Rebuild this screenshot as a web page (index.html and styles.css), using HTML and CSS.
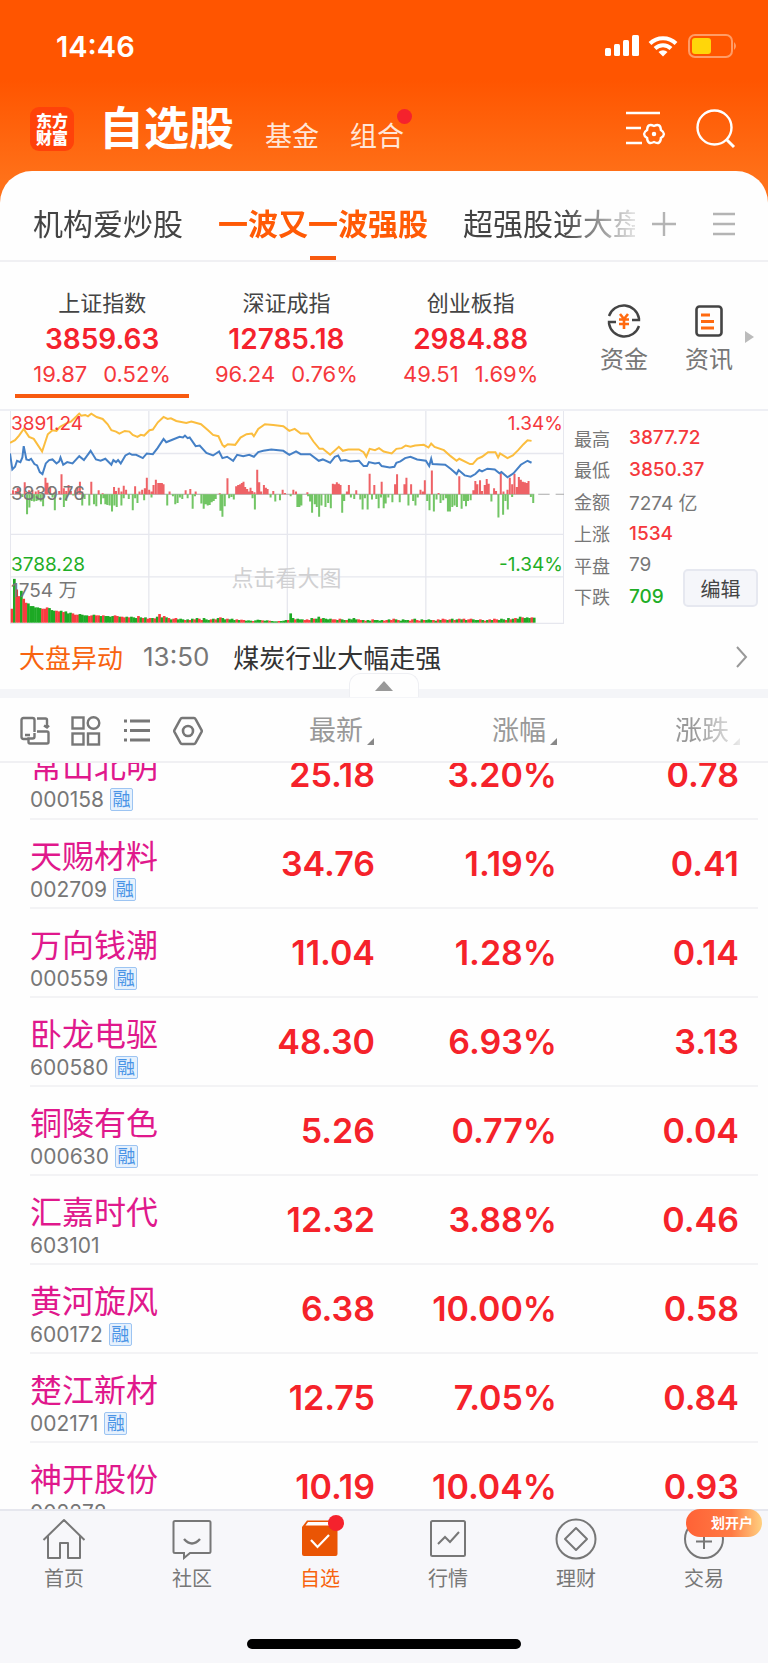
FILE: index.html
```html
<!DOCTYPE html>
<html lang="zh-CN">
<head>
  <meta charset="UTF-8" />
  <meta name="viewport" content="width=device-width, initial-scale=1" />
  <title>自选股</title>
  <link rel="stylesheet" href="styles.css">
</head>
<body>

  <header class="header">
    <div class="status">
      <span class="time">14:46</span>
      <svg class="signal" width="36" height="22" viewBox="0 0 36 22" fill="#fff">
        <rect x="1" y="13" width="6" height="8" rx="1.5" /><rect x="10" y="9" width="6" height="12" rx="1.5" />
        <rect x="19" y="5" width="6" height="16" rx="1.5" /><rect x="28" y="0" width="7" height="21" rx="1.5" />
      </svg>
      <svg class="wifi" width="30" height="22" viewBox="0 0 30 22" fill="none" stroke="#fff" stroke-width="4">
        <path d="M2 8.500a18.500 18.500 0 0 1 26 0M7 13.500a11.500 11.500 0 0 1 16 0" />
        <path d="M15 21.500l-4.500-4.500a6.500 6.500 0 0 1 9 0z" fill="#fff" stroke="none" />
      </svg>
      <svg class="battery" width="50" height="24" viewBox="0 0 50 24">
        <rect x="1" y="1" width="43" height="22" rx="6" fill="none" stroke="#ff9c66" stroke-width="2" />
        <rect x="4" y="4" width="19" height="16" rx="3" fill="#ffd60a" />
        <path d="M46 8q4 4 0 8z" fill="#ff9c66" />
      </svg>
    </div>
    <nav class="main-nav">
      <div class="logo">东方<br>财富</div>
      <a href="#" class="current">自选股</a>
      <a href="#">基金</a>
      <a href="#" class="has-dot">组合</a>
      <button class="icon-btn filter" aria-label="设置">
        <svg width="40" height="36" viewBox="0 0 40 36" fill="none" stroke="#fff" stroke-width="2.400">
          <path d="M0 2h34M0 17h15M0 32h16" />
          <path d="M34.900 27Q34.500 34.300 28 31Q21.500 34.300 21.100 27Q15 23 21.100 19Q21.500 11.700 28 15Q34.500 11.700 34.900 19Q41 23 34.900 27z" />
          <circle cx="28" cy="23" r="1.500" fill="#fff" stroke-width="1.500" />
        </svg>
      </button>
      <button class="icon-btn" aria-label="搜索">
        <svg width="40" height="40" viewBox="0 0 40 40" fill="none" stroke="#fff" stroke-width="2.400">
          <circle cx="18.500" cy="18.500" r="17" /><path d="M30 30l8 8" stroke-width="3" />
        </svg>
      </button>
    </nav>
  </header>

  <main class="sheet">
    <div class="groups">
      <div class="group-list">
        <a href="#">机构爱炒股</a>
        <a href="#" class="current">一波又一波强股</a>
        <a href="#">超强股逆大盘</a>
      </div>
      <button class="icon-btn plus" aria-label="添加">
        <svg width="24" height="24" viewBox="0 0 24 24" stroke="#b4b4b4" stroke-width="2.400"><path d="M0 12h24M12 0v24" /></svg>
      </button>
      <button class="icon-btn" aria-label="管理">
        <svg width="22" height="24" viewBox="0 0 22 24" stroke="#b4b4b4" stroke-width="2.400"><path d="M0 2h22M0 12h22M0 22h22" /></svg>
      </button>
    </div>

    <section class="indices">
      <div class="index active"><h2>上证指数</h2><strong>3859.63</strong><p><span>19.87</span><span>0.52%</span></p></div>
      <div class="index"><h2>深证成指</h2><strong>12785.18</strong><p><span>96.24</span><span>0.76%</span></p></div>
      <div class="index"><h2>创业板指</h2><strong>2984.88</strong><p><span>49.51</span><span>1.69%</span></p></div>
      <div class="shortcuts">
        <a href="#">
          <svg width="34" height="34" viewBox="0 0 34 34" fill="none" stroke="#444" stroke-width="2.400">
            <path d="M2 12A15.500 15.500 0 0 1 32 14.500v1.500h-7M32 22A15.500 15.500 0 0 1 2 19.500V18h7" />
            <path d="M13 10l4 5 4-5M12 15.500h10M12 20h10M17 15v10" stroke="#ff6a10" stroke-width="2.600" />
          </svg>
          资金
        </a>
        <a href="#">
          <svg width="28" height="34" viewBox="0 0 28 34" fill="none" stroke="#444" stroke-width="2.600">
            <rect x="1.500" y="2.500" width="25" height="29" rx="3" />
            <path d="M6 11h9M6 17.500h13M6 24h13" stroke="#ff6a10" stroke-width="3" />
          </svg>
          资讯
        </a>
        <span class="more"></span>
      </div>
    </section>

    <section class="market">
      <div class="chart">
        <svg id="chart" viewBox="33 30 1656 642" preserveAspectRatio="none"></svg>
        <span class="label high up">3891.24</span>
        <span class="label high end up">1.34%</span>
        <span class="label mid">3839.76</span>
        <span class="label low down">3788.28</span>
        <span class="label low end down">-1.34%</span>
        <span class="label vol">1754 万</span>
        <span class="label hint">点击看大图</span>
      </div>
      <dl class="summary">
        <div><dt>最高</dt><dd class="up">3877.72</dd></div>
        <div><dt>最低</dt><dd class="up">3850.37</dd></div>
        <div><dt>金额</dt><dd>7274 亿</dd></div>
        <div><dt>上涨</dt><dd class="up">1534</dd></div>
        <div><dt>平盘</dt><dd>79</dd></div>
        <div><dt>下跌</dt><dd class="down">709</dd></div>
      </dl>
      <button class="edit">编辑</button>
    </section>

    <a href="#" class="news">
      <b>大盘异动</b>
      <time>13:50</time>
      <span>煤炭行业大幅走强</span>
      <svg width="12" height="22" viewBox="0 0 12 22" fill="none" stroke="#999" stroke-width="2"><path d="M1 1l9 10-9 10" /></svg>
    </a>
    <div class="band"><button class="collapse" aria-label="收起"></button></div>

    <div class="columns">
      <div class="tools">
        <button class="icon-btn" aria-label="横屏">
          <svg width="30" height="30" viewBox="0 0 30 30" fill="none" stroke="#777" stroke-width="2.400">
            <path d="M9 23H3.500Q1.500 23 1.500 21V4q0-2 2-2h9q2 0 2 2v12M5 19h5" />
            <path d="M17 2.500h8.500q1.500 0 1.500 1.500v7M24 9.500l3 2 2-2" />
            <path d="M17 15.500h10q1.500 0 1.500 1.500v9q0 1.500-1.500 1.500H10q-1.500 0-1.500-1.500v-3.500h4q2 0 2-2v-3.500" />
          </svg>
        </button>
        <button class="icon-btn" aria-label="宫格">
          <svg width="30" height="30" viewBox="0 0 30 30" fill="none" stroke="#777" stroke-width="2.400">
            <rect x="1.500" y="1.500" width="11" height="11" /><circle cx="22.500" cy="7" r="5.800" />
            <rect x="1.500" y="17.500" width="11" height="11" /><rect x="17" y="17.500" width="11" height="11" />
          </svg>
        </button>
        <button class="icon-btn" aria-label="列表">
          <svg width="30" height="30" viewBox="0 0 30 30" stroke="#777" stroke-width="3">
            <path d="M2 5h3M8 5h20M2 14.500h3M8 14.500h20M2 24h3M8 24h20" />
          </svg>
        </button>
        <button class="icon-btn" aria-label="设置">
          <svg width="30" height="30" viewBox="0 0 30 30" fill="none" stroke="#777" stroke-width="2.600">
            <path d="M9 2h12q1 0 1.500 1l6 11q.5 1 0 2l-6 11q-.5 1-1.500 1H9q-1 0-1.500-1l-6-11q-.5-1 0-2l6-11q.5-1 1.500-1z" />
            <circle cx="15" cy="15" r="5" />
          </svg>
        </button>
      </div>
      <button class="sort">最新</button>
      <button class="sort">涨幅</button>
      <button class="sort faded">涨跌</button>
    </div>

    <div class="stocks" id="stocks">
      <table>
        <tbody id="rows"></tbody>
      </table>
    </div>
  </main>

  <footer class="tabbar">
    <nav>
      <a href="#">
        <svg width="44" height="42" viewBox="0 0 44 42" fill="none" stroke="#777" stroke-width="2">
          <path d="M1.500 22L22 2l20.500 20M6 18v22h12V25h8v15h12V18" stroke-linejoin="round" />
        </svg>
        首页
      </a>
      <a href="#">
        <svg width="44" height="42" viewBox="0 0 44 42" fill="none" stroke="#777" stroke-width="2">
          <path d="M5 3h34q1.500 0 1.500 1.500v29q0 1.500-1.500 1.500H20l-6 5v-5H5q-1.500 0-1.500-1.500v-29Q3.500 3 5 3z" />
          <path d="M14 21q8 9 16 0" stroke-width="2.400" />
        </svg>
        社区
      </a>
      <a href="#" class="current has-dot">
        <svg width="44" height="42" viewBox="0 0 44 42" fill="none">
          <path d="M4 9l5-6.500h29q1.500 0 1.500 2V36q0 2-2 2H6q-2 0-2-2z" fill="#ea5504" />
          <path d="M7.500 7.500L10 4h27l-2.500 3.500z" fill="#fff" />
          <path d="M13 22l6.500 7L31 17" stroke="#fff" stroke-width="2.200" />
        </svg>
        自选
      </a>
      <a href="#">
        <svg width="44" height="42" viewBox="0 0 44 42" fill="none" stroke="#777" stroke-width="2">
          <rect x="5" y="3" width="34" height="35" rx="1.500" /><path d="M12 26l7-7 5 5 9-10" />
        </svg>
        行情
      </a>
      <a href="#">
        <svg width="44" height="42" viewBox="0 0 44 42" fill="none" stroke="#777" stroke-width="2">
          <circle cx="22" cy="21" r="19.500" /><path d="M22 10l11 11-11 11-11-11z" stroke-linejoin="round" />
        </svg>
        理财
      </a>
      <a href="#">
        <svg width="44" height="42" viewBox="0 0 44 42" fill="none" stroke="#777" stroke-width="2">
          <circle cx="22" cy="21" r="19" /><path d="M22 14v17M14 23.500h16" />
        </svg>
        交易
        <span class="promo">划开户</span>
      </a>
    </nav>
    <div class="home-bar"></div>
  </footer>

  <script src="script.js"></script>
</body>
</html>
```

FILE: styles.css
```css
* {
  box-sizing: border-box;
  margin: 0;
  padding: 0;
}
body {
  height: 100vh;
  display: flex;
  flex-direction: column;
  overflow: hidden;
  font-family: Inter, "Noto Sans CJK SC", sans-serif;
  color: #444;
  background: linear-gradient(#ff5500 80px, #ff7119 180px);
}
a {
  color: inherit;
  text-decoration: none;
}
button {
  font-family: inherit;
  color: inherit;
  background: none;
  border: none;
}
svg {
  display: block;
}
.icon-btn {
  display: flex;
  flex: none;
}
.up {
  color: #f5383c;
}
.down {
  color: #1fae26;
}

/* 顶部 */
.header {
  color: #fff;
}
.status {
  display: flex;
  align-items: center;
  height: 92px;
  padding: 0 30px 0 56px;
}
.time {
  margin-right: auto;
  font-size: 29px;
  font-weight: 600;
}
.wifi {
  margin: 0 10px 0 8px;
}
.main-nav {
  display: flex;
  align-items: center;
  height: 79px;
  padding: 0 32px 5px 30px;
}
.logo {
  width: 44px;
  height: 44px;
  padding-top: 6px;
  margin-right: 25px;
  border-radius: 9px;
  background: #ff420a;
  font-size: 16px;
  line-height: 17px;
  font-weight: 900;
  text-align: center;
}
.main-nav a {
  position: relative;
  margin-right: 31px;
  padding-top: 16px;
  font-size: 27px;
  line-height: 40px;
  color: #ffe6d8;
}
.main-nav a.current {
  padding-top: 0;
  font-size: 45px;
  line-height: 60px;
  font-weight: 700;
  color: #fff;
}
.has-dot::after {
  content: "";
  position: absolute;
  top: 8px;
  right: -8px;
  width: 15px;
  height: 15px;
  border-radius: 50%;
  background: #f5222d;
}
.filter {
  margin-left: auto;
  margin-right: 30px;
}

/* 分组 */
.sheet {
  flex: 1;
  min-height: 0;
  display: flex;
  flex-direction: column;
  background: #fefefe;
  border-radius: 32px 32px 0 0;
}
.groups {
  display: flex;
  flex: none;
  align-items: center;
  height: 91px;
  padding: 0 33px;
  border-bottom: 2px solid #f0f0f3;
}
.group-list {
  flex: 1;
  display: flex;
  gap: 35px;
  height: 91px;
  overflow: hidden;
  white-space: nowrap;
  font-size: 30px;
  line-height: 108px;
  -webkit-mask-image: linear-gradient(90deg, #000 88%, transparent 102%);
  mask-image: linear-gradient(90deg, #000 88%, transparent 102%);
}
.group-list .current {
  position: relative;
  font-weight: 700;
  color: #ff5a05;
}
.group-list .current::after {
  content: "";
  position: absolute;
  left: 50%;
  top: 86px;
  width: 26px;
  height: 4px;
  margin-left: -13px;
  background: #f85a10;
}
.groups .icon-btn {
  margin-top: 16px;
}
.groups .plus {
  margin-left: 17px;
  margin-right: 37px;
}

/* 指数 */
.indices {
  display: flex;
  flex: none;
  height: 149px;
  padding: 0 0 11px 10px;
  border-bottom: 2px solid #eeeff4;
}
.index {
  flex: 185;
  padding-top: 25px;
  margin: 0 5px;
  text-align: center;
}
.index.active {
  border-bottom: 4px solid #f85a10;
}
.index h2 {
  font-size: 22px;
  line-height: 32px;
  font-weight: 400;
}
.index strong {
  display: block;
  font-size: 28px;
  line-height: 40px;
  font-weight: 600;
  color: #f5222d;
}
.index p {
  display: flex;
  justify-content: center;
  gap: 16px;
  font-size: 22px;
  line-height: 30px;
  color: #f5383c;
}
.shortcuts {
  flex: 203;
  display: flex;
  align-items: center;
  justify-content: flex-end;
  padding-right: 14px;
  font-size: 24px;
  line-height: 36px;
  color: #777;
}
.shortcuts a {
  display: flex;
  flex-direction: column;
  align-items: center;
  gap: 4px;
  margin-right: 37px;
  padding-top: 22px;
}
.shortcuts a + a {
  margin-right: 12px;
}
.more {
  margin-top: 14px;
  border-left: 9px solid #bbb;
  border-top: 6px solid transparent;
  border-bottom: 6px solid transparent;
}

/* 分时图 */
.market {
  display: flex;
  flex: none;
  height: 213px;
  padding: 0 10px 0 10px;
}
.chart {
  position: relative;
  flex: 1;
  margin-right: 10px;
}
#chart {
  width: 100%;
  height: 100%;
}
.label {
  position: absolute;
  left: 1px;
  font-size: 19px;
  line-height: 24px;
}
.label.end {
  left: auto;
  right: 1px;
}
.high {
  top: 1px;
}
.mid {
  top: 71px;
  color: #777;
}
.low {
  top: 142px;
}
.vol {
  top: 168px;
  color: #777;
  word-spacing: normal;
}
.hint {
  left: 40%;
  top: 151px;
  font-size: 22px;
  line-height: 32px;
  color: #d0d0d2;
}
.summary {
  display: grid;
  width: 109px;
  padding: 11px 0 12px;
  font-size: 18px;
  white-space: nowrap;
  color: #777;
}
.summary div {
  display: flex;
  align-items: center;
  gap: 19px;
}
.summary dd {
  font-size: 19px;
}
.summary .up,
.summary .down {
  font-weight: 500;
}
.edit {
  align-self: flex-end;
  width: 75px;
  height: 38px;
  margin-bottom: 17px;
  border: 2px solid #e6e8f0;
  border-radius: 5px;
  background: #f5f6fa;
  font-size: 20px;
}

/* 异动 */
.news {
  display: flex;
  flex: none;
  align-items: center;
  height: 65px;
  padding: 0 20px 0 19px;
  font-size: 26px;
}
.news b {
  font-weight: 400;
  color: #f8640f;
}
.news time {
  margin: 0 24px 0 20px;
  color: #777;
}
.news span {
  color: #333;
}
.news svg {
  margin-left: auto;
}
.band {
  position: relative;
  flex: none;
  height: 9px;
  background: #f4f5f8;
}
.collapse {
  position: absolute;
  left: 50%;
  bottom: 1px;
  width: 70px;
  height: 24px;
  margin-left: -35px;
  border: 1px solid #eeeff3;
  border-bottom: none;
  border-radius: 12px 12px 0 0;
  background: #fefefe;
}
.collapse::after {
  content: "";
  display: block;
  width: 0;
  margin: 0 auto;
  border-bottom: 10px solid #999;
  border-left: 9px solid transparent;
  border-right: 9px solid transparent;
}

/* 列表 */
.columns {
  display: flex;
  flex: none;
  align-items: center;
  height: 65px;
  padding: 2px 28px 0 20px;
  border-bottom: 2px solid #f0f0f3;
}
.tools {
  display: flex;
  gap: 21px;
  margin-right: auto;
}
.sort {
  display: flex;
  align-items: flex-end;
  justify-content: flex-end;
  width: 183px;
  gap: 4px;
  font-size: 27px;
  line-height: 40px;
  color: #999;
}
.sort:first-of-type {
  width: 140px;
}
.sort::after {
  content: "";
  margin-bottom: 6px;
  border-left: 7px solid transparent;
  border-bottom: 7px solid #888;
}
.sort.faded {
  -webkit-mask-image: linear-gradient(90deg, #000 75%, transparent 105%);
  mask-image: linear-gradient(90deg, #000 75%, transparent 105%);
}
.stocks {
  flex: 1;
  min-height: 0;
  overflow-y: auto;
  scrollbar-width: none;
  padding: 0 10px 0 30px;
}
.stocks table {
  width: 100%;
  border-collapse: collapse;
  table-layout: fixed;
}
.stocks td {
  width: 182px;
  height: 89px;
  border-bottom: 2px solid #f3f3f5;
  text-align: right;
  font-size: 34px;
  font-weight: 600;
  color: #f5222a;
}
.stocks td:last-child {
  width: 201px;
  padding-right: 19px;
}
.stocks th {
  padding-top: 18px;
  vertical-align: top;
  text-align: left;
  font-weight: 400;
  border-bottom: 2px solid #f3f3f5;
}
.name {
  display: block;
  font-size: 32px;
  line-height: 38px;
  color: #e0188c;
}
.code {
  display: flex;
  align-items: center;
  gap: 6px;
  height: 26px;
  font-size: 21px;
  color: #777;
}
.code i {
  width: 23px;
  height: 23px;
  border: 1px solid #9cc4f2;
  border-radius: 2px;
  background: #e6f1fd;
  font-size: 18px;
  line-height: 21px;
  font-style: normal;
  text-align: center;
  color: #4a94e6;
}

/* 底部 */
.tabbar {
  flex: none;
  height: 154px;
  display: flex;
  flex-direction: column;
  align-items: center;
  justify-content: space-between;
  padding-bottom: 14px;
  border-top: 2px solid #e6e7ee;
  background: #f7f7fa;
}
.tabbar nav {
  display: flex;
  width: 100%;
}
.tabbar a {
  position: relative;
  flex: 1;
  display: flex;
  flex-direction: column;
  align-items: center;
  padding-top: 7px;
  font-size: 20px;
  line-height: 38px;
  color: #777;
}
.tabbar a.current {
  color: #f8640f;
}
.tabbar .has-dot::after {
  top: 4px;
  right: 40px;
  width: 16px;
  height: 16px;
}
.promo {
  position: absolute;
  top: -2px;
  right: 6px;
  width: 76px;
  height: 28px;
  padding-right: 9px;
  border-radius: 14px;
  background: linear-gradient(90deg, #ff6236, #ff7a44 60%, #ffd080);
  font-size: 14px;
  line-height: 28px;
  font-weight: 700;
  text-align: right;
  color: #fff;
}
.home-bar {
  width: 274px;
  height: 10px;
  border-radius: 5px;
  background: #000;
}
```

FILE: script.js
```js
const stocks = [
  ["常山北明", "000158", true, "25.18", "3.20%", "0.78"],
  ["天赐材料", "002709", true, "34.76", "1.19%", "0.41"],
  ["万向钱潮", "000559", true, "11.04", "1.28%", "0.14"],
  ["卧龙电驱", "600580", true, "48.30", "6.93%", "3.13"],
  ["铜陵有色", "000630", true, "5.26", "0.77%", "0.04"],
  ["汇嘉时代", "603101", false, "12.32", "3.88%", "0.46"],
  ["黄河旋风", "600172", true, "6.38", "10.00%", "0.58"],
  ["楚江新材", "002171", true, "12.75", "7.05%", "0.84"],
  ["神开股份", "002278", false, "10.19", "10.04%", "0.93"]
];

document.getElementById("rows").innerHTML = stocks.map(([name, code, margin, price, pct, diff]) =>
  `<tr><th scope="row"><span class="name">${name}</span><span class="code">${code}${margin ? "<i>融</i>" : ""}</span></th>` +
  `<td>${price}</td><td>${pct}</td><td>${diff}</td></tr>`
).join("");

// 列表停在第一行的中间
document.getElementById("stocks").scrollTop = 33;

// 分时线
const avgLine = "33,126 48,118 60,104 74,84 90,108 104,114 129,152 146,100 160,88 172,90 182,78 200,68 215,62 232,46 240,38 246,44 258,42 266,46 276,38 292,48 310,54 325,70 336,88 350,92 360,98 376,90 390,92 400,102 414,108 424,102 434,104 450,88 460,86 475,64 492,48 504,54 514,52 530,60 560,66 575,62 604,70 625,88 640,102 656,106 668,132 674,138 684,130 706,132 722,110 740,100 756,98 762,106 775,84 795,70 820,72 850,76 868,90 884,84 902,98 924,98 940,122 958,144 968,144 990,162 1016,138 1028,150 1044,146 1076,146 1090,154 1098,168 1108,144 1124,148 1136,142 1150,152 1174,158 1188,144 1204,142 1216,134 1230,138 1244,134 1270,132 1284,140 1292,128 1302,138 1330,148 1350,166 1368,180 1376,174 1408,190 1416,190 1430,174 1444,168 1462,154 1484,154 1492,170 1498,158 1520,172 1536,164 1552,148 1568,130 1580,118 1592,120";
const priceLine = "33,158 40,206 48,198 54,180 64,184 70,170 74,136 82,176 90,178 96,174 106,190 114,194 122,214 130,220 140,188 150,178 160,176 172,188 180,182 184,170 192,192 204,184 220,188 240,166 254,178 274,150 290,176 304,180 318,174 336,192 342,178 350,184 356,178 364,188 378,164 390,158 398,162 410,162 430,172 442,158 460,160 474,142 492,114 500,124 520,116 540,108 550,110 556,104 564,112 570,110 588,136 600,134 620,156 640,164 658,152 668,172 682,168 700,180 712,162 730,166 748,162 762,168 775,154 790,150 814,146 850,150 868,162 888,152 902,160 930,160 956,180 968,176 990,186 1004,168 1014,164 1022,180 1036,178 1050,182 1076,180 1090,196 1100,196 1106,184 1124,188 1136,186 1144,196 1168,200 1182,198 1188,186 1200,182 1214,172 1230,168 1250,176 1276,180 1286,196 1292,174 1296,190 1334,192 1350,204 1368,220 1374,208 1392,224 1410,228 1424,220 1436,208 1444,212 1460,204 1482,206 1496,218 1502,214 1520,230 1538,218 1560,192 1580,180 1592,186";

// 红绿柱: x,高度
const upBars = "42,12 50,10 56,20 62,18 77,36 90,12 100,14 110,8 118,12 139,50 145,35 153,20 166,6 180,10 187,60 194,18 201,10 208,28 215,10 228,12 235,22 242,38 249,8 276,38 298,12 310,3 344,22 350,10 358,20 366,8 373,26 380,14 407,24 420,8 428,14 436,18 442,50 449,14 456,8 462,28 469,44 476,34 482,34 487,34 492,30 510,8 558,12 572,16 588,8 660,3 683,48 709,24 715,28 721,30 726,34 731,38 736,22 742,16 748,8 752,20 757,10 764,6 772,74 778,36 784,8 792,28 798,20 803,16 820,10 848,14 855,4 880,14 888,8 922,6 998,32 1004,30 1010,36 1016,32 1021,28 1040,8 1046,28 1068,12 1108,62 1122,28 1144,38 1184,30 1190,60 1212,30 1218,50 1232,30 1260,14 1267,8 1273,42 1294,72 1314,4 1376,54 1418,12 1424,40 1430,30 1438,42 1444,10 1452,28 1458,46 1464,32 1480,18 1486,10 1500,64 1508,8 1520,14 1527,50 1534,30 1541,62 1548,22 1554,52 1560,44 1566,38 1572,36 1578,34 1583,40";
const downBars = "70,8 84,60 91,40 98,20 105,22 112,20 118,18 125,22 132,36 160,10 167,48 194,38 201,20 222,4 249,34 256,14 270,34 284,30 291,36 305,30 312,12 318,30 324,32 331,34 338,52 345,34 352,38 366,34 373,12 388,14 400,48 407,12 414,26 434,18 456,10 503,34 520,6 527,30 534,26 541,10 548,14 564,12 579,44 586,6 605,28 612,44 618,30 624,34 630,32 636,24 642,20 648,14 662,50 668,68 675,36 688,12 695,8 702,16 758,12 765,46 812,10 826,22 840,18 872,6 892,38 898,38 904,34 924,6 930,22 936,56 944,30 950,38 957,68 964,34 976,38 984,26 992,42 1026,56 1032,20 1052,10 1062,14 1080,16 1087,46 1094,12 1102,46 1115,16 1128,14 1135,42 1142,10 1150,42 1156,28 1164,10 1176,24 1198,24 1224,34 1238,20 1245,34 1252,10 1280,20 1287,48 1300,52 1308,16 1320,26 1328,18 1336,12 1342,52 1348,52 1355,38 1362,34 1369,38 1383,44 1390,20 1396,36 1402,20 1410,18 1472,22 1493,70 1507,62 1514,20 1521,46 1534,8 1590,8 1597,26";

// 成交量, 每分钟一根
const volume = [42,132,100,80,96,72,60,58,50,50,46,46,44,42,42,46,44,38,36,36,34,36,32,34,28,30,28,24,24,26,24,22,22,20,22,24,22,22,20,22,20,20,18,20,22,20,18,18,16,18,16,18,16,14,20,16,14,16,12,14,14,13,18,26,16,20,16,14,10,12,14,10,12,10,8,10,8,12,10,14,12,8,14,10,8,10,12,10,14,16,14,10,12,10,12,8,10,8,9,8,6,7,6,5,7,9,8,7,6,7,6,5,4,4,5,5,6,8,8,28,14,10,12,10,10,8,10,8,14,12,12,18,12,14,12,10,12,10,10,8,12,10,8,8,12,10,14,10,10,8,8,6,8,6,10,8,8,6,8,6,8,10,8,12,10,8,6,10,8,8,6,10,12,8,6,10,8,8,10,8,8,6,10,8,12,10,8,10,12,8,10,12,10,12,8,10,12,10,8,8,10,8,6,8,10,8,12,10,8,12,10,8,14,10,12,14,12,18,16,14,16,14,16,15];
const colors = "rgrrgrrgggggggrrrggggrrgrggg";
const volBars = volume.map((h, i) => {
  const color = colors[(i * (i < 28 ? 1 : 5) + Math.floor(i / 9)) % colors.length] === "r" ? "#f93c40" : "#1da924";
  return `<rect x="${35 + i * 7}" y="${668 - h}" width="8" height="${h}" fill="${color}"/>`;
}).join("");

function bars(list, dir) {
  return list.split(" ").map(p => {
    const [x, h] = p.split(",");
    return `M${x} 281v${dir * h}`;
  }).join("");
}

document.getElementById("chart").innerHTML =
  `<path d="M34 30V670H1688V30M448 30V670M862 30V670M1276 30V670M33 158H1689M33 402H1689M33 530H1689" fill="none" stroke="#e6e7ee" stroke-width="4"/>
  <path d="M33 281H1600" stroke="#aaa" stroke-width="3"/>
  <path d="M1612 281H1689" stroke="#aaa" stroke-width="3" stroke-dasharray="34 18"/>
  <path d="${bars(upBars, -1)}" stroke="#ee6266" stroke-width="6"/>
  <path d="${bars(downBars, 1)}" stroke="#72c565" stroke-width="6"/>
  <polyline points="${avgLine}" fill="none" stroke="#fbbd3e" stroke-width="6"/>
  <polyline points="${priceLine}" fill="none" stroke="#4580c6" stroke-width="6"/>
  ${volBars}`;
```
